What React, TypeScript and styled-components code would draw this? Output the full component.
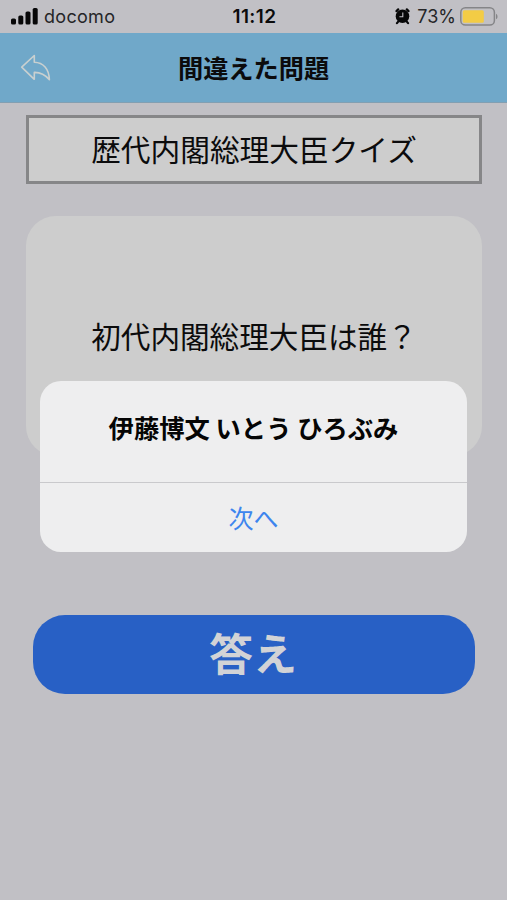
import React from "react";
import styled, { createGlobalStyle } from "styled-components";

const GlobalStyle = createGlobalStyle`
  html, body { margin: 0; padding: 0; }
  body { background: #c1c0c5; }
  * { box-sizing: border-box; }
`;

const Screen = styled.div`
  position: relative;
  width: 507px;
  height: 900px;
  overflow: hidden;
  display: flex;
  flex-direction: column;
  background: #c1c0c5;
  color: #0b0b0c;
  font-family: "Noto Sans CJK JP", sans-serif;
`;

const StatusBar = styled.header`
  height: 33px;
  flex: none;
  display: grid;
  grid-template-columns: 1fr auto 1fr;
  align-items: center;
  padding: 1px 9px 0 11px;
  font-family: Inter, sans-serif;
  font-size: 18px;
  line-height: 22px;
`;

const Carrier = styled.div`
  display: flex;
  align-items: center;
  gap: 6px;
  color: #252527;
  letter-spacing: 0.3px;
`;

const Clock = styled.div`
  font-weight: 600;
  font-size: 19px;
  letter-spacing: 0.4px;
`;

const DeviceState = styled.div`
  display: flex;
  align-items: center;
  justify-content: flex-end;
  color: #252527;
`;

const Percent = styled.span`
  margin: 0 4px 0 7px;
  font-size: 18px;
`;

const NavBar = styled.nav`
  height: 70px;
  flex: none;
  display: grid;
  grid-template-columns: 60px 1fr 60px;
  align-items: center;
  background: #70a8c9;
  border-bottom: 1px solid #829fb2;
`;

const BackButton = styled.button`
  display: flex;
  padding: 0 0 0 20px;
  border: 0;
  background: none;
`;

const NavTitle = styled.h1`
  margin: 0;
  padding-bottom: 2px;
  text-align: center;
  font-size: 25.2px;
  line-height: 36px;
  font-weight: 700;
`;

const Content = styled.main`
  display: flex;
  flex-direction: column;
  padding: 12px 25px 0 26px;
`;

const QuizName = styled.div`
  height: 69px;
  display: flex;
  align-items: center;
  justify-content: center;
  padding-bottom: 1px;
  border: 3px solid #868688;
  background: #cdcdcd;
  font-size: 29.7px;
  line-height: 40px;
  font-weight: 400;
`;

const QuestionCard = styled.section`
  height: 240px;
  margin-top: 32px;
  display: flex;
  align-items: center;
  justify-content: center;
  padding-bottom: 1px;
  border-radius: 30px;
  background: #cdcdcd;
  font-size: 29.6px;
  line-height: 40px;
`;

const AnswerButton = styled.button`
  height: 79px;
  margin: 159px 7px 0 7px;
  padding: 0 2px 5px 0;
  border: 0;
  border-radius: 32px;
  background: #2860c5;
  color: #d2d3d6;
  font-family: inherit;
  font-size: 44px;
  line-height: 60px;
  font-weight: 700;
`;

const Alert = styled.div`
  position: absolute;
  left: 40px;
  top: 381px;
  width: 427px;
  height: 171px;
  display: flex;
  flex-direction: column;
  overflow: hidden;
  border-radius: 21px;
  background: #eeeeef;
`;

const AlertMessage = styled.div`
  height: 102px;
  display: flex;
  align-items: center;
  justify-content: center;
  padding-bottom: 9px;
  border-bottom: 1px solid #c9c9cc;
  color: #050505;
  font-size: 25.3px;
  line-height: 36px;
  font-weight: 700;
`;

const AlertAction = styled.button`
  flex: 1;
  padding: 0 0 2px;
  border: 0;
  background: none;
  color: #3d85ee;
  font-family: inherit;
  font-size: 25px;
  line-height: 36px;
`;

const SignalIcon = () => (
  <svg width="27" height="18" viewBox="0 0 27 18" fill="#070708">
    <rect x="0" y="10.5" width="5" height="6" rx="1.6" />
    <rect x="7.3" y="7.5" width="5" height="9" rx="1.6" />
    <rect x="14.5" y="3.5" width="5" height="13" rx="1.6" />
    <rect x="21.7" y="0" width="5" height="16.5" rx="1.6" />
  </svg>
);

const AlarmIcon = () => (
  <svg width="15" height="18" viewBox="0 0 15 18">
    <circle cx="7.5" cy="8.3" r="6.8" fill="#070708" />
    <path d="M1.5 3.1 3.2 1.4M13.5 3.1l-1.7-1.7M3.2 13.6l-1.2 1.5M11.8 13.6l1.2 1.5" stroke="#070708" strokeWidth="2.2" strokeLinecap="round" />
    <path d="M7.8 4.6v4.2H4.4" fill="none" stroke="#c1c0c5" strokeWidth="1.1" />
  </svg>
);

const BatteryIcon = () => (
  <svg width="38" height="20" viewBox="0 0 38 20">
    <rect x="0.8" y="0.8" width="33.6" height="17.2" rx="4.6" fill="none" stroke="#858588" strokeWidth="1.5" />
    <rect x="2.8" y="3.3" width="21" height="12.4" rx="1.5" fill="#f3cc45" />
    <path d="M36 6.7c2 1 2 4.6 0 5.6z" fill="#858588" />
  </svg>
);

const BackIcon = () => (
  <svg width="32" height="28" viewBox="0 0 32 28">
    <path
      d="M1.7 13.2 14.3 1.5V8.2C23.4 8.4 29 15 29.4 25.7C25.2 20.8 21 18.2 14.3 18.4V25.3Z"
      fill="none"
      stroke="#c9d0d0"
      strokeWidth="1.6"
      strokeLinejoin="round"
    />
  </svg>
);

export default function App() {
  return (
    <>
      <GlobalStyle />
      <Screen>
        <StatusBar>
          <Carrier>
            <SignalIcon />
            docomo
          </Carrier>
          <Clock>11:12</Clock>
          <DeviceState>
            <AlarmIcon />
            <Percent>73%</Percent>
            <BatteryIcon />
          </DeviceState>
        </StatusBar>
        <NavBar>
          <BackButton aria-label="戻る">
            <BackIcon />
          </BackButton>
          <NavTitle>間違えた問題</NavTitle>
        </NavBar>
        <Content>
          <QuizName>歴代内閣総理大臣クイズ</QuizName>
          <QuestionCard>初代内閣総理大臣は誰？</QuestionCard>
          <AnswerButton>答え</AnswerButton>
        </Content>
        <Alert role="alertdialog">
          <AlertMessage>伊藤博文 いとう ひろぶみ</AlertMessage>
          <AlertAction>次へ</AlertAction>
        </Alert>
      </Screen>
    </>
  );
}
